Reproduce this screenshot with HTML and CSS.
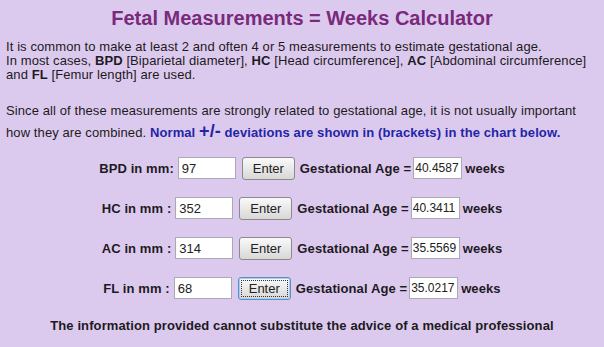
FILE: index.html
```html
<!DOCTYPE html>
<html lang="en">
<head>
    <meta charset="UTF-8">
    <title>Fetal Measurements = Weeks Calculator</title>
    <link rel="stylesheet" href="styles.css">
</head>
<body>
    <h1 class="title">Fetal Measurements = Weeks Calculator</h1>

    <p class="intro">
        It is common to make at least 2 and often 4 or 5 measurements to estimate gestational age.<br>
        In most cases, <b>BPD</b> [Biparietal diameter], <b>HC</b> [Head circumference], <b>AC</b> [Abdominal circumference]<br>
        and <b>FL</b> [Femur length] are used.
    </p>

    <p class="intro second">
        Since all of these measurements are strongly related to gestational age, it is not usually important<br>
        how they are combined. <span class="note">Normal <span class="pm">+/-</span> deviations are shown in (brackets) in the chart below.</span>
    </p>

    <form class="calc" onsubmit="return false">
        <!-- one row per measurement -->
        <div class="row">
            <label>BPD in mm:</label>
            <input type="text" class="mm" value="97">
            <button type="button">Enter</button>
            <span class="ga">Gestational Age =</span>
            <input type="text" class="weeks" value="40.4587">
            <span class="unit">weeks</span>
        </div>
        <div class="row">
            <label>HC in mm :</label>
            <input type="text" class="mm" value="352">
            <button type="button">Enter</button>
            <span class="ga">Gestational Age =</span>
            <input type="text" class="weeks" value="40.3411">
            <span class="unit">weeks</span>
        </div>
        <div class="row">
            <label>AC in mm :</label>
            <input type="text" class="mm" value="314">
            <button type="button">Enter</button>
            <span class="ga">Gestational Age =</span>
            <input type="text" class="weeks" value="35.5569">
            <span class="unit">weeks</span>
        </div>
        <div class="row">
            <label>FL in mm :</label>
            <input type="text" class="mm" value="68">
            <button type="button" class="focused">Enter</button>
            <span class="ga">Gestational Age =</span>
            <input type="text" class="weeks" value="35.0217">
            <span class="unit">weeks</span>
        </div>
    </form>

    <p class="disclaimer">The information provided cannot substitute the advice of a medical professional</p>
</body>
</html>
```

FILE: styles.css
```css
body {
    font-family: "Liberation Sans", Arial, sans-serif;
    font-size: 13px;
    letter-spacing: 0.1px;
    color: #1c1a22;
    background-color: #dccaee;
    margin: 0;
    padding: 7px 0 0 6px;
}

.title {
    font-size: 20px;
    letter-spacing: 0;
    color: #7a2a7c;
    text-align: center;
    margin: 0 6px 10px 0;
    line-height: 23px;
}

.intro {
    margin: 0;
    line-height: 14px;
    white-space: nowrap;
}

.intro.second {
    margin-top: 18px;
    line-height: 22px;
}

.note {
    color: #2424a8;
    font-weight: bold;
}

.pm {
    font-size: 18px;
    line-height: 0;
}

.calc {
    margin: 13px 6px 0 0;
    display: flex;
    flex-direction: column;
    gap: 18px;
}

.row {
    display: flex;
    justify-content: center;
    align-items: center;
    height: 22px;
    font-weight: bold;
}

.row input {
    font-family: "Liberation Sans", Arial, sans-serif;
    font-size: 13px;
    color: #222;
    background: #fff;
    border: 1px solid #a9a9b4;
    height: 22px;
    box-sizing: border-box;
    padding: 1px 3px;
    margin: 0;
}

.row input.mm {
    width: 58px;
    margin-left: 4px;
}

.row input.weeks {
    font-size: 12px;
    letter-spacing: 0;
    width: 49px;
    margin: 0 3px 0 2px;
    padding: 1px 1px;
}

.row button {
    font-family: "Liberation Sans", Arial, sans-serif;
    font-size: 13px;
    color: #222;
    height: 23px;
    width: 53px;
    margin: 0 5px 0 6px;
    padding: 0;
    border: 1px solid #8a8a8a;
    border-radius: 3px;
    background: linear-gradient(#fafafa, #e8e8e8 50%, #d8d8d8);
}

.row button.focused {
    border-color: #5a8fc4;
    box-shadow: inset 0 0 0 1px #a8cdf0;
    outline: 1px dotted #333;
    outline-offset: -4px;
}

.disclaimer {
    margin: 19px 6px 0 0;
    text-align: center;
    font-weight: bold;
}
```
